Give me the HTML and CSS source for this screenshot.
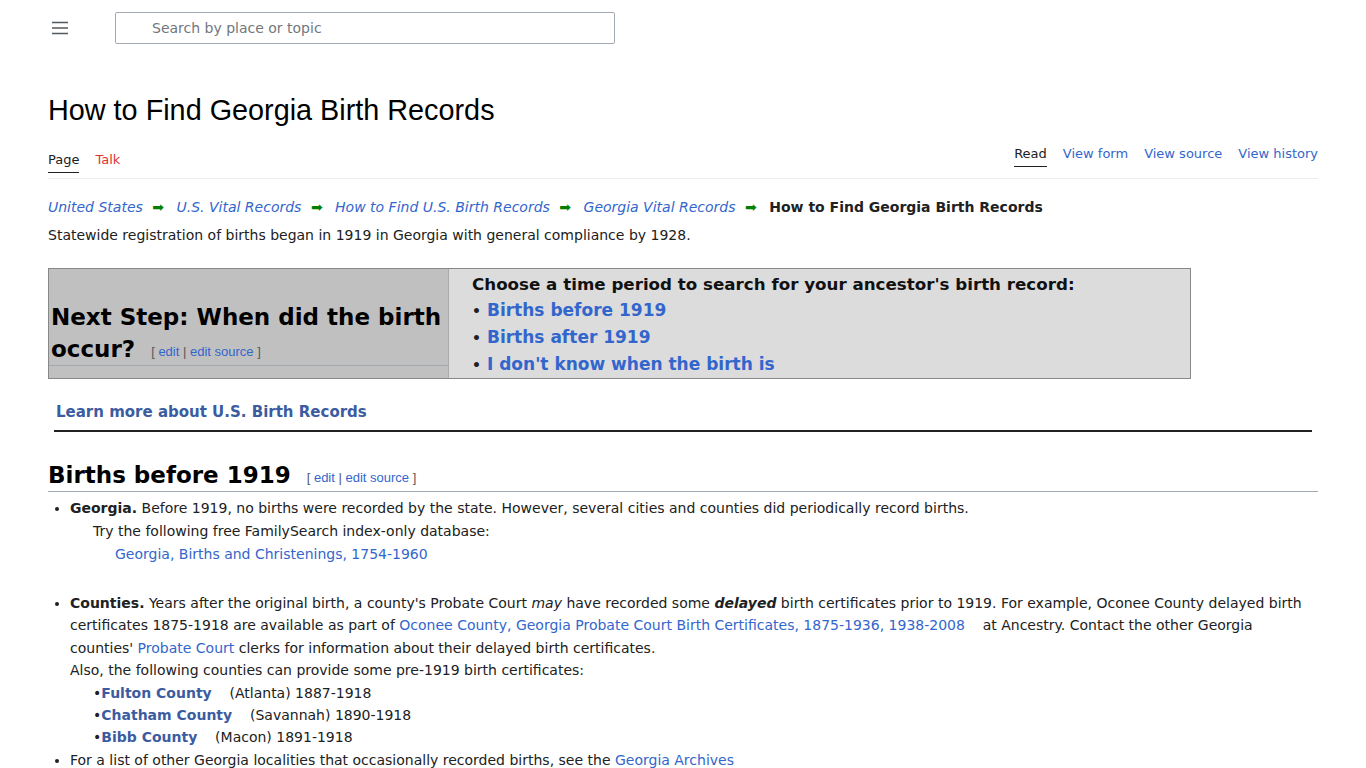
FILE: index.html
```html
<!DOCTYPE html>
<html lang="en">
<head>
<meta charset="utf-8">
<title>How to Find Georgia Birth Records</title>
<link rel="stylesheet" href="styles.css">
</head>
<body>
<header class="topbar">
  <button class="menu-btn" aria-label="Menu">
    <svg width="16" height="14" viewBox="0 0 16 14"><path d="M0 1.5h16M0 7h16M0 12.5h16" stroke="#54595d" stroke-width="1.6" fill="none"/></svg>
  </button>
  <div class="search"><span class="placeholder">Search by place or topic</span></div>
</header>

<main class="content">
  <h1 class="page-title">How to Find Georgia Birth Records</h1>

  <nav class="tabs">
    <div class="tabs-left">
      <a class="tab active">Page</a>
      <a class="tab red">Talk</a>
    </div>
    <div class="tabs-right">
      <a class="tab active">Read</a>
      <a class="tab">View form</a>
      <a class="tab">View source</a>
      <a class="tab">View history</a>
    </div>
  </nav>

  <div class="crumbs">
    <a>United States</a><span class="arr">➡</span>
    <a>U.S. Vital Records</a><span class="arr">➡</span>
    <a>How to Find U.S. Birth Records</a><span class="arr">➡</span>
    <a>Georgia Vital Records</a><span class="arr">➡</span>
    <strong>How to Find Georgia Birth Records</strong>
  </div>
  <p class="intro">Statewide registration of births began in 1919 in Georgia with general compliance by 1928.</p>

  <div class="stepbox">
    <div class="step-left">
      <h2 class="step-h">Next Step: When did the birth occur? <span class="editlinks">[ <a>edit</a> | <a>edit source</a> ]</span></h2>
    </div>
    <div class="step-right">
      <div class="choose">Choose a time period to search for your ancestor's birth record:</div>
      <div class="opt"><span class="dot">•</span><a>Births before 1919</a></div>
      <div class="opt"><span class="dot">•</span><a>Births after 1919</a></div>
      <div class="opt"><span class="dot">•</span><a>I don't know when the birth is</a></div>
    </div>
  </div>

  <div class="learn"><a>Learn more about U.S. Birth Records</a></div>
  <hr class="rule">

  <h2 class="sec-h">Births before 1919 <span class="editlinks">[ <a>edit</a> | <a>edit source</a> ]</span></h2>

  <ul class="list">
    <li>
      <b>Georgia.</b> Before 1919, no births were recorded by the state. However, several cities and counties did periodically record births.
      <div class="ind1">Try the following free FamilySearch index-only database:</div>
      <div class="ind2"><a>Georgia, Births and Christenings, 1754-1960</a></div>
    </li>
    <li class="gap">
      <b>Counties.</b> Years after the original birth, a county's Probate Court <i>may</i> have recorded some <b><i>delayed</i></b> birth certificates prior to 1919. For example, Oconee County delayed birth certificates 1875-1918 are available as part of <a>Oconee County, Georgia Probate Court Birth Certificates, 1875-1936, 1938-2008</a> &nbsp;&nbsp; at Ancestry. Contact the other Georgia counties' <a>Probate Court</a> clerks for information about their delayed birth certificates.
      <div>Also, the following counties can provide some pre-1919 birth certificates:</div>
      <div class="county">•<a>Fulton County</a> &nbsp;&nbsp; (Atlanta) 1887-1918</div>
      <div class="county">•<a>Chatham County</a> &nbsp;&nbsp; (Savannah) 1890-1918</div>
      <div class="county">•<a>Bibb County</a> &nbsp;&nbsp; (Macon) 1891-1918</div>
    </li>
    <li>For a list of other Georgia localities that occasionally recorded births, see the <a>Georgia Archives</a></li>
  </ul>
</main>
</body>
</html>
```

FILE: styles.css
```css
* { box-sizing: border-box; }
body {
  margin: 0;
  font-family: "DejaVu Sans", Verdana, sans-serif;
  font-size: 14px;
  color: #202122;
  background: #fff;
}
a { color: #3366cc; text-decoration: none; cursor: pointer; }

.topbar {
  display: flex;
  align-items: flex-start;
  height: 56px;
  padding: 12px 0 0 48px;
}
.menu-btn {
  width: 24px; height: 32px;
  border: 0; background: none; padding: 0;
  display: flex; align-items: center; justify-content: center;
  margin-right: 43px;
}
.search {
  width: 500px; height: 32px;
  border: 1px solid #a2a9b1;
  border-radius: 2px;
  padding-left: 36px;
  display: flex; align-items: center;
}
.placeholder { color: #72777d; font-size: 14px; }

.content { padding: 0 48px; }

.page-title {
  font-family: "Liberation Sans", Arial, sans-serif;
  font-weight: normal;
  font-size: 28.8px;
  margin: 37px 0 0;
  line-height: 34px;
  color: #000;
}

.tabs {
  display: flex;
  justify-content: space-between;
  align-items: flex-end;
  border-bottom: 1px solid #eaecf0;
  margin-top: 11px;
  height: 41px;
  font-size: 13px;
  line-height: 16px;
}
.tabs-left, .tabs-right { display: flex; gap: 16px; }
.tabs-left { padding-bottom: 5px; }
.tabs-right { padding-bottom: 11px; }
.tab { color: #3366cc; padding-bottom: 4px; border-bottom: 1px solid transparent; }
.tab.red { color: #d33; }
.tab.active { color: #202122; border-bottom-color: #202122; }

.crumbs {
  margin-top: 18px;
  font-size: 14px;
  line-height: 20px;
}
.crumbs a { font-style: italic; }
.crumbs .arr { color: #008000; margin: 0 8px 0 9.5px; font-size: 14px; }
.crumbs strong { font-weight: bold; color: #202122; }

.intro { margin: 8px 0 0; line-height: 20px; }

.stepbox {
  display: flex;
  width: 1143px;
  height: 111px;
  margin-top: 23px;
  border: 1px solid #888;
}
.step-left {
  width: 400px;
  background: #c0c0c0;
  display: flex;
  align-items: flex-end;
  border-right: 1px solid #aaa;
  padding-bottom: 12px;
}
.step-h {
  font-family: "DejaVu Sans", sans-serif;
  font-weight: 900;
  font-size: 23px;
  line-height: 32px;
  color: #000;
  margin: 0;
  padding: 0 0 0 2px;
  width: 100%;
  border-bottom: 1px solid #a2a9b1;
}
.editlinks {
  font-family: "Liberation Sans", Arial, sans-serif;
  font-weight: normal;
  font-size: 13px;
  line-height: 16px;
  color: #54595d;
  margin-left: 8px;
  vertical-align: 1px;
}
.step-right {
  flex: 1;
  background: #dcdcdc;
  padding: 3px 0 0 23px;
  font-weight: bold;
}
.choose { font-size: 16.7px; line-height: 25px; color: #111; }
.opt { font-size: 17px; line-height: 27px; height: 27px; color: #202122; }
.dot { font-size: 14px; line-height: 1; margin-right: 6px; }

.learn {
  margin: 24px 0 0 8px;
  font-size: 15px;
  font-weight: bold;
}
.learn a { color: #3b5ca0; }
.rule {
  margin: 9px 6px 0 6px;
  border: 0;
  border-top: 2px solid #202122;
}

.sec-h {
  font-family: "DejaVu Sans", sans-serif;
  font-weight: 900;
  font-size: 23px;
  color: #000;
  margin: 27px 0 0;
  line-height: 32px;
  border-bottom: 1px solid #a2a9b1;
  padding-bottom: 0;
}

.list {
  margin: 5px 0 0;
  padding-left: 22px;
  line-height: 23px;
}
.list li { margin: 0; }
.list li.gap { margin-top: 26px; line-height: 22.4px; }
.ind1 { padding-left: 23px; }
.ind2 { padding-left: 45px; }
.county { padding-left: 23px; }
.county a { font-weight: bold; color: #3b5ca0; }
```
